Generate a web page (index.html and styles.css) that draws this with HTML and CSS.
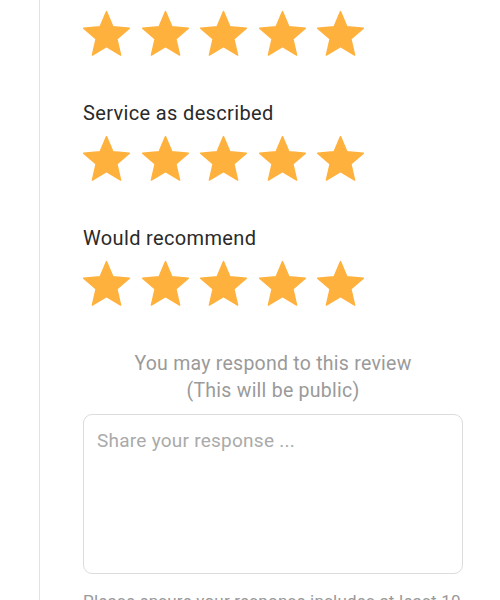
FILE: index.html
```html
<!DOCTYPE html>
<html>
<head>
<meta charset="utf-8">
<link rel="stylesheet" href="styles.css">
</head>
<body>
<div class="page">
  <div class="rail"></div>
  <div class="content">
    <div class="stars first">
      <svg class="star" viewBox="0 0 24 24"><path d="M12 17.27L18.18 21l-1.64-7.03L22 9.24l-7.19-.61L12 2 9.19 8.63 2 9.24l5.46 4.73L5.82 21z"/></svg>
      <svg class="star" viewBox="0 0 24 24"><path d="M12 17.27L18.18 21l-1.64-7.03L22 9.24l-7.19-.61L12 2 9.19 8.63 2 9.24l5.46 4.73L5.82 21z"/></svg>
      <svg class="star" viewBox="0 0 24 24"><path d="M12 17.27L18.18 21l-1.64-7.03L22 9.24l-7.19-.61L12 2 9.19 8.63 2 9.24l5.46 4.73L5.82 21z"/></svg>
      <svg class="star" viewBox="0 0 24 24"><path d="M12 17.27L18.18 21l-1.64-7.03L22 9.24l-7.19-.61L12 2 9.19 8.63 2 9.24l5.46 4.73L5.82 21z"/></svg>
      <svg class="star" viewBox="0 0 24 24"><path d="M12 17.27L18.18 21l-1.64-7.03L22 9.24l-7.19-.61L12 2 9.19 8.63 2 9.24l5.46 4.73L5.82 21z"/></svg>
    </div>
    <div class="label">Service as described</div>
    <div class="stars">
      <svg class="star" viewBox="0 0 24 24"><path d="M12 17.27L18.18 21l-1.64-7.03L22 9.24l-7.19-.61L12 2 9.19 8.63 2 9.24l5.46 4.73L5.82 21z"/></svg>
      <svg class="star" viewBox="0 0 24 24"><path d="M12 17.27L18.18 21l-1.64-7.03L22 9.24l-7.19-.61L12 2 9.19 8.63 2 9.24l5.46 4.73L5.82 21z"/></svg>
      <svg class="star" viewBox="0 0 24 24"><path d="M12 17.27L18.18 21l-1.64-7.03L22 9.24l-7.19-.61L12 2 9.19 8.63 2 9.24l5.46 4.73L5.82 21z"/></svg>
      <svg class="star" viewBox="0 0 24 24"><path d="M12 17.27L18.18 21l-1.64-7.03L22 9.24l-7.19-.61L12 2 9.19 8.63 2 9.24l5.46 4.73L5.82 21z"/></svg>
      <svg class="star" viewBox="0 0 24 24"><path d="M12 17.27L18.18 21l-1.64-7.03L22 9.24l-7.19-.61L12 2 9.19 8.63 2 9.24l5.46 4.73L5.82 21z"/></svg>
    </div>
    <div class="label">Would recommend</div>
    <div class="stars">
      <svg class="star" viewBox="0 0 24 24"><path d="M12 17.27L18.18 21l-1.64-7.03L22 9.24l-7.19-.61L12 2 9.19 8.63 2 9.24l5.46 4.73L5.82 21z"/></svg>
      <svg class="star" viewBox="0 0 24 24"><path d="M12 17.27L18.18 21l-1.64-7.03L22 9.24l-7.19-.61L12 2 9.19 8.63 2 9.24l5.46 4.73L5.82 21z"/></svg>
      <svg class="star" viewBox="0 0 24 24"><path d="M12 17.27L18.18 21l-1.64-7.03L22 9.24l-7.19-.61L12 2 9.19 8.63 2 9.24l5.46 4.73L5.82 21z"/></svg>
      <svg class="star" viewBox="0 0 24 24"><path d="M12 17.27L18.18 21l-1.64-7.03L22 9.24l-7.19-.61L12 2 9.19 8.63 2 9.24l5.46 4.73L5.82 21z"/></svg>
      <svg class="star" viewBox="0 0 24 24"><path d="M12 17.27L18.18 21l-1.64-7.03L22 9.24l-7.19-.61L12 2 9.19 8.63 2 9.24l5.46 4.73L5.82 21z"/></svg>
    </div>
    <div class="respond">You may respond to this review<br>(This will be public)</div>
    <div class="response">Share your response ...</div>
    <div class="hint">Please ensure your response includes at least 10 characters</div>
  </div>
</div>
</body>
</html>
```

FILE: styles.css
```css
html, body {
  margin: 0;
  padding: 0;
  background: #ffffff;
  height: 600px;
  overflow: hidden;
}
.page {
  display: flex;
  height: 600px;
  font-family: Roboto, "Noto Sans", sans-serif;
}
.rail {
  width: 1px;
  margin-left: 39px;
  background: #e2e2e2;
  flex: none;
}
.content {
  padding-left: 43px;
  width: 380px;
  display: flex;
  flex-direction: column;
}
.stars {
  display: flex;
  flex: none;
  gap: 3.5px;
  height: 55px;
  margin-top: 5px;
  margin-left: -4px;
}
.stars.first {
  margin-top: 7px;
}
.star {
  width: 55px;
  height: 55px;
  fill: #ffb13d;
  stroke: #ffb13d;
  stroke-width: 0.6;
  stroke-linejoin: round;
}
.label {
  flex: none;
  margin-top: 37px;
  font-size: 20px;
  line-height: 28px;
  letter-spacing: 0.35px;
  color: #2a2a2a;
}
.respond {
  flex: none;
  margin-top: 38px;
  font-size: 19.5px;
  line-height: 27px;
  letter-spacing: 0.25px;
  color: #9a9a9a;
  text-align: center;
}
.response {
  flex: none;
  margin-top: 10px;
  border: 1px solid #dcdcdc;
  border-radius: 9px;
  box-sizing: border-box;
  height: 160px;
  padding: 12px 13px;
  font-size: 19px;
  line-height: 28px;
  letter-spacing: 0.25px;
  color: #aaaaaa;
}
.hint {
  flex: none;
  margin-top: 15px;
  font-size: 17px;
  line-height: 24px;
  letter-spacing: 0.2px;
  color: #9a9a9a;
}
```
